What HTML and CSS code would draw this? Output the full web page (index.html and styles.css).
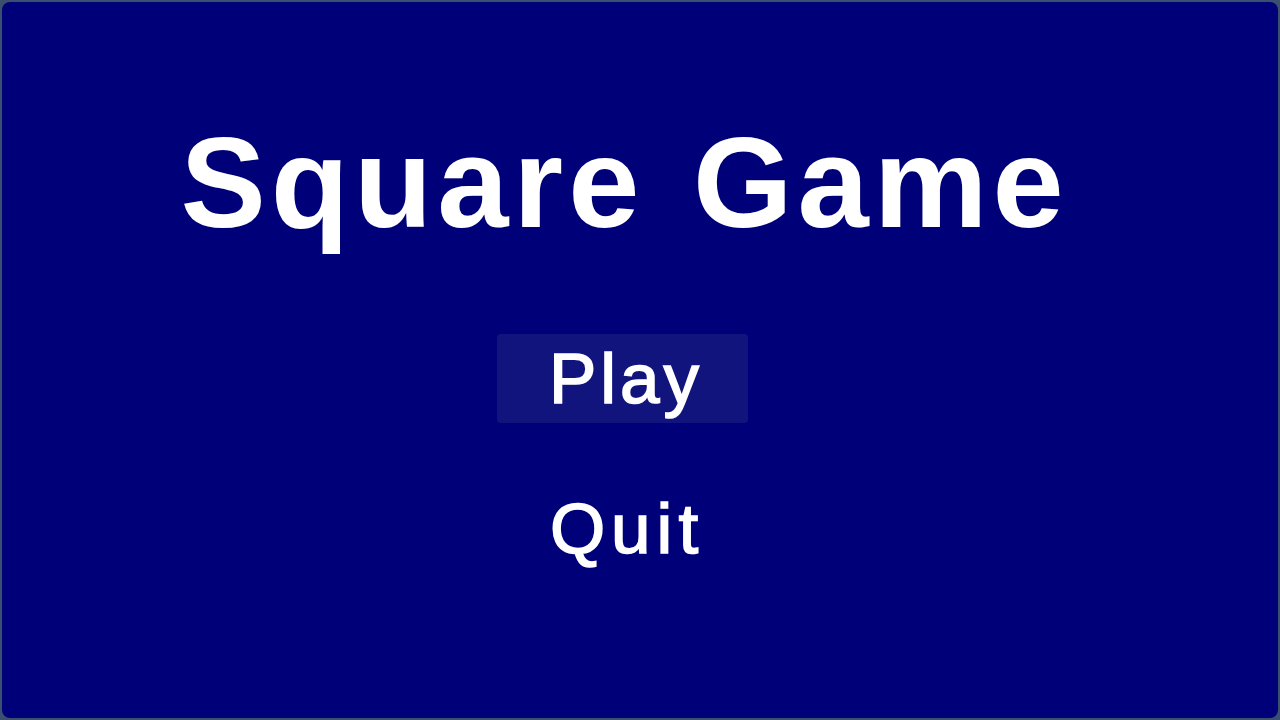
FILE: index.html
```html
<!DOCTYPE html>
<html>
<head>
<meta charset="utf-8">
<link rel="stylesheet" href="styles.css">
</head>
<body>
<div class="panel">
  <h1 class="title">Square Game</h1>
  <div class="menu">
    <button class="btn btn-active">Play</button>
    <button class="btn btn-wide">Quit</button>
  </div>
</div>
</body>
</html>
```
FILE: styles.css
```css
html, body {
  margin: 0;
  padding: 0;
  width: 1280px;
  height: 720px;
  overflow: hidden;
}
body {
  background: #3b4f6e;
  padding: 2px;
  box-sizing: border-box;
  font-family: "Liberation Sans", Arial, sans-serif;
}
.panel {
  height: 100%;
  background: #000078;
  border-radius: 8px;
  display: flex;
  flex-direction: column;
  align-items: center;
  box-sizing: border-box;
  padding-top: 117px;
  padding-right: 36px;
}
.title {
  margin: 0;
  color: #ffffff;
  font-size: 128px;
  font-weight: 700;
  letter-spacing: 5px;
  word-spacing: 8px;
  line-height: 128px;
  padding-left: 5px;
}
.menu {
  margin-top: 87px;
  display: flex;
  flex-direction: column;
  align-items: center;
  gap: 61px;
}
.btn {
  width: 251px;
  height: 89px;
  border: none;
  border-radius: 4px;
  background: transparent;
  color: #ffffff;
  font-family: inherit;
  font-size: 71px;
  font-weight: 400;
  letter-spacing: 4px;
  line-height: 89px;
  padding: 0 0 0 8px;
  -webkit-text-stroke: 1.6px #ffffff;
}
.btn-active {
  background: #10147c;
}
.btn-wide {
  letter-spacing: 6px;
  padding-left: 10px;
}
```
